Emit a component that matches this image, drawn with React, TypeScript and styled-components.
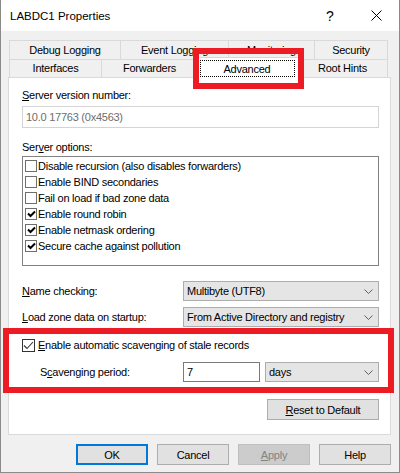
import React from 'react';
import styled, { createGlobalStyle } from 'styled-components';

const FONT = `"Liberation Sans", Arial, sans-serif`;

const Global = createGlobalStyle`
  html, body { margin: 0; padding: 0; background: #ffffff; }
  body { font-family: ${FONT}; font-size: 11px; color: #000; }
  * { box-sizing: border-box; }
`;

const Window = styled.div`
  position: relative;
  width: 400px;
  height: 473px;
  display: flex;
  flex-direction: column;
  background: #f0f0f0;
  border: 1px solid #8a8a8a;
  border-top: none;
  font-family: ${FONT};
  font-size: 11px;
  letter-spacing: -0.25px;
  overflow: hidden;
`;

const TitleBar = styled.div`
  height: 31px;
  flex: none;
  display: flex;
  align-items: center;
  background: #ffffff;
  padding-left: 9px;
`;

const Title = styled.div`
  flex: 1;
  font-size: 11.5px;
  letter-spacing: 0;
  color: #000;
`;

const CaptionButton = styled.div`
  width: 46px;
  height: 31px;
  display: flex;
  align-items: center;
  justify-content: center;
  font-size: 14px;
  letter-spacing: 0;
`;

const Body = styled.div`
  flex: 1;
  display: flex;
  flex-direction: column;
  padding: 9px 8px 8px 7px;
`;

const TabStrip = styled.div`
  position: relative;
  z-index: 2;
  margin-left: 1px;
  width: 380px;
  display: flex;
  flex-direction: column;
`;

const TabRow = styled.div<{ $h: number }>`
  display: flex;
  height: ${p => p.$h}px;
`;

const Tab = styled.div<{ $w: number; $last?: boolean }>`
  width: ${p => p.$w}px;
  flex: none;
  display: flex;
  align-items: center;
  justify-content: center;
  border-top: 1px solid #d9d9d9;
  border-left: 1px solid #d9d9d9;
  border-right: ${p => (p.$last ? '1px solid #d9d9d9' : 'none')};
  background: #f0f0f0;
  white-space: nowrap;
  overflow: hidden;
  padding-bottom: 1px;
`;

const ActiveTab = styled.div<{ $w: number }>`
  width: ${p => p.$w + 4}px;
  flex: none;
  margin: -2px -2px -1px -2px;
  height: 21px;
  display: flex;
  align-items: flex-start;
  justify-content: center;
  padding-top: 2px;
  background: #ffffff;
  border: 1px solid #d9d9d9;
  border-bottom: none;
  position: relative;
  z-index: 3;
`;

const FocusRect = styled.div`
  width: 95px;
  height: 17px;
  border: 1px dotted #000;
  display: flex;
  align-items: center;
  justify-content: center;
  line-height: 14px;
`;

const Panel = styled.div`
  height: 358px;
  flex: none;
  background: #ffffff;
  border: 1px solid #d9d9d9;
  display: flex;
  flex-direction: column;
  padding: 9px 11px 0 13px;
`;

const Label = styled.div<{ $mt?: number }>`
  line-height: 16px;
  height: 16px;
  margin-top: ${p => p.$mt ?? 0}px;
  white-space: nowrap;
`;

const ReadOnlyBox = styled.div`
  margin-top: 3px;
  height: 22px;
  border: 1px solid #d4d4d4;
  color: #6d6d6d;
  display: flex;
  align-items: center;
  padding-left: 3px;
`;

const ListBox = styled.div`
  margin-top: 1px;
  height: 110px;
  border: 1px solid #828282;
  padding: 1px 2px;
  display: flex;
  flex-direction: column;
`;

const ListItem = styled.div`
  height: 16px;
  display: flex;
  align-items: center;
  gap: 1px;
  white-space: nowrap;
`;

const ListCheck = styled.div`
  width: 12px;
  height: 12px;
  border: 1px solid #6e6e6e;
  background: #fff;
  display: flex;
  align-items: center;
  justify-content: center;
  flex: none;
`;

const FormRow = styled.div<{ $mt: number; $indent?: number }>`
  margin-top: ${p => p.$mt}px;
  padding-left: ${p => p.$indent ?? 0}px;
  display: flex;
  align-items: center;
  height: 20px;
`;

const RowLabel = styled.div<{ $w: number }>`
  width: ${p => p.$w}px;
  flex: none;
  white-space: nowrap;
`;

const Combo = styled.div`
  flex: 1;
  height: 20px;
  background: #e5e5e5;
  border: 1px solid #adadad;
  display: flex;
  align-items: center;
  justify-content: space-between;
  padding: 0 5px 0 3px;
  white-space: nowrap;
`;

const TextInput = styled.div`
  width: 77px;
  height: 20px;
  flex: none;
  margin-right: 5px;
  border: 1px solid #7a7a7a;
  background: #fff;
  display: flex;
  align-items: center;
  padding-left: 3px;
`;

const CheckLine = styled.div`
  margin-top: 10px;
  height: 16px;
  display: flex;
  align-items: center;
  gap: 3px;
  white-space: nowrap;
`;

const CheckBox = styled.div`
  width: 13px;
  height: 13px;
  border: 1px solid #333;
  background: #fff;
  flex: none;
  display: flex;
  align-items: center;
  justify-content: center;
`;

const ResetRow = styled.div`
  margin-top: 17px;
  display: flex;
  justify-content: flex-end;
`;

const Button = styled.div<{ $w: number; $default?: boolean; $disabled?: boolean }>`
  width: ${p => p.$w}px;
  height: 21px;
  flex: none;
  display: flex;
  align-items: center;
  justify-content: center;
  background: ${p => (p.$disabled ? '#cccccc' : '#e1e1e1')};
  border: ${p => (p.$default ? '2px solid #0078d7' : p.$disabled ? '1px solid #bfbfbf' : '1px solid #adadad')};
  color: ${p => (p.$disabled ? '#838383' : '#000')};
  white-space: nowrap;
`;

const Footer = styled.div`
  margin-top: 9px;
  display: flex;
  justify-content: flex-end;
  gap: 9px;
`;

const Highlight = styled.div<{ $x: number; $y: number; $w: number; $h: number }>`
  position: absolute;
  left: ${p => p.$x}px;
  top: ${p => p.$y}px;
  width: ${p => p.$w}px;
  height: ${p => p.$h}px;
  border: 6px solid #ed1c24;
  z-index: 10;
  pointer-events: none;
`;

const Chevron = () => (
  <svg width="9" height="5" viewBox="0 0 9 5">
    <polyline points="0.5,0.5 4.5,4.5 8.5,0.5" fill="none" stroke="#606060" strokeWidth="1" />
  </svg>
);

const BoldCheck = () => (
  <svg width="9" height="8" viewBox="0 0 9 8">
    <polyline points="1,3.5 3.5,6 8,1.5" fill="none" stroke="#000" strokeWidth="2" />
  </svg>
);

const ThinCheck = () => (
  <svg width="11" height="9" viewBox="0 0 11 9">
    <polyline points="1,4.5 4,7.5 10,1" fill="none" stroke="#333" strokeWidth="1.1" />
  </svg>
);

const CloseIcon = () => (
  <svg width="11" height="11" viewBox="0 0 11 11">
    <line x1="0.5" y1="0.5" x2="10.5" y2="10.5" stroke="#000" strokeWidth="1" />
    <line x1="10.5" y1="0.5" x2="0.5" y2="10.5" stroke="#000" strokeWidth="1" />
  </svg>
);

const options: [string, boolean][] = [
  ['Disable recursion (also disables forwarders)', false],
  ['Enable BIND secondaries', false],
  ['Fail on load if bad zone data', false],
  ['Enable round robin', true],
  ['Enable netmask ordering', true],
  ['Secure cache against pollution', true],
];

export default function App() {
  return (
    <>
      <Global />
      <Window>
        <TitleBar>
          <Title>LABDC1 Properties</Title>
          <CaptionButton>?</CaptionButton>
          <CaptionButton><CloseIcon /></CaptionButton>
        </TitleBar>
        <Body>
          <TabStrip>
            <TabRow $h={19}>
              <Tab $w={111}>Debug Logging</Tab>
              <Tab $w={108}>Event Logging</Tab>
              <Tab $w={86}>Monitoring</Tab>
              <Tab $w={74} $last>Security</Tab>
            </TabRow>
            <TabRow $h={18}>
              <Tab $w={92}>Interfaces</Tab>
              <Tab $w={96}>Forwarders</Tab>
              <ActiveTab $w={100}><FocusRect>Advanced</FocusRect></ActiveTab>
              <Tab $w={91} $last>Root Hints</Tab>
            </TabRow>
          </TabStrip>
          <Panel>
            <Label><u>S</u>erver version number:</Label>
            <ReadOnlyBox>10.0 17763 (0x4563)</ReadOnlyBox>
            <Label $mt={11}>Ser<u>v</u>er options:</Label>
            <ListBox>
              {options.map(([text, on]) => (
                <ListItem key={text}>
                  <ListCheck>{on && <BoldCheck />}</ListCheck>
                  {text}
                </ListItem>
              ))}
            </ListBox>
            <FormRow $mt={15}>
              <RowLabel $w={161}><u>N</u>ame checking:</RowLabel>
              <Combo>Multibyte (UTF8)<Chevron /></Combo>
            </FormRow>
            <FormRow $mt={6}>
              <RowLabel $w={161}><u>L</u>oad zone data on startup:</RowLabel>
              <Combo>From Active Directory and registry<Chevron /></Combo>
            </FormRow>
            <CheckLine>
              <CheckBox><ThinCheck /></CheckBox>
              <span><u>E</u>nable automatic scavenging of stale records</span>
            </CheckLine>
            <FormRow $mt={9} $indent={18}>
              <RowLabel $w={143}>S<u>c</u>avenging period:</RowLabel>
              <TextInput>7</TextInput>
              <Combo>days<Chevron /></Combo>
            </FormRow>
            <ResetRow>
              <Button $w={112}><span><u>R</u>eset to Default</span></Button>
            </ResetRow>
          </Panel>
          <Footer>
            <Button $w={72} $default>OK</Button>
            <Button $w={72}>Cancel</Button>
            <Button $w={72} $disabled><span><u>A</u>pply</span></Button>
            <Button $w={72}>Help</Button>
          </Footer>
        </Body>
        <Highlight $x={192} $y={48} $w={111} $h={41} />
        <Highlight $x={2} $y={328} $w={391} $h={65} />
      </Window>
    </>
  );
}
